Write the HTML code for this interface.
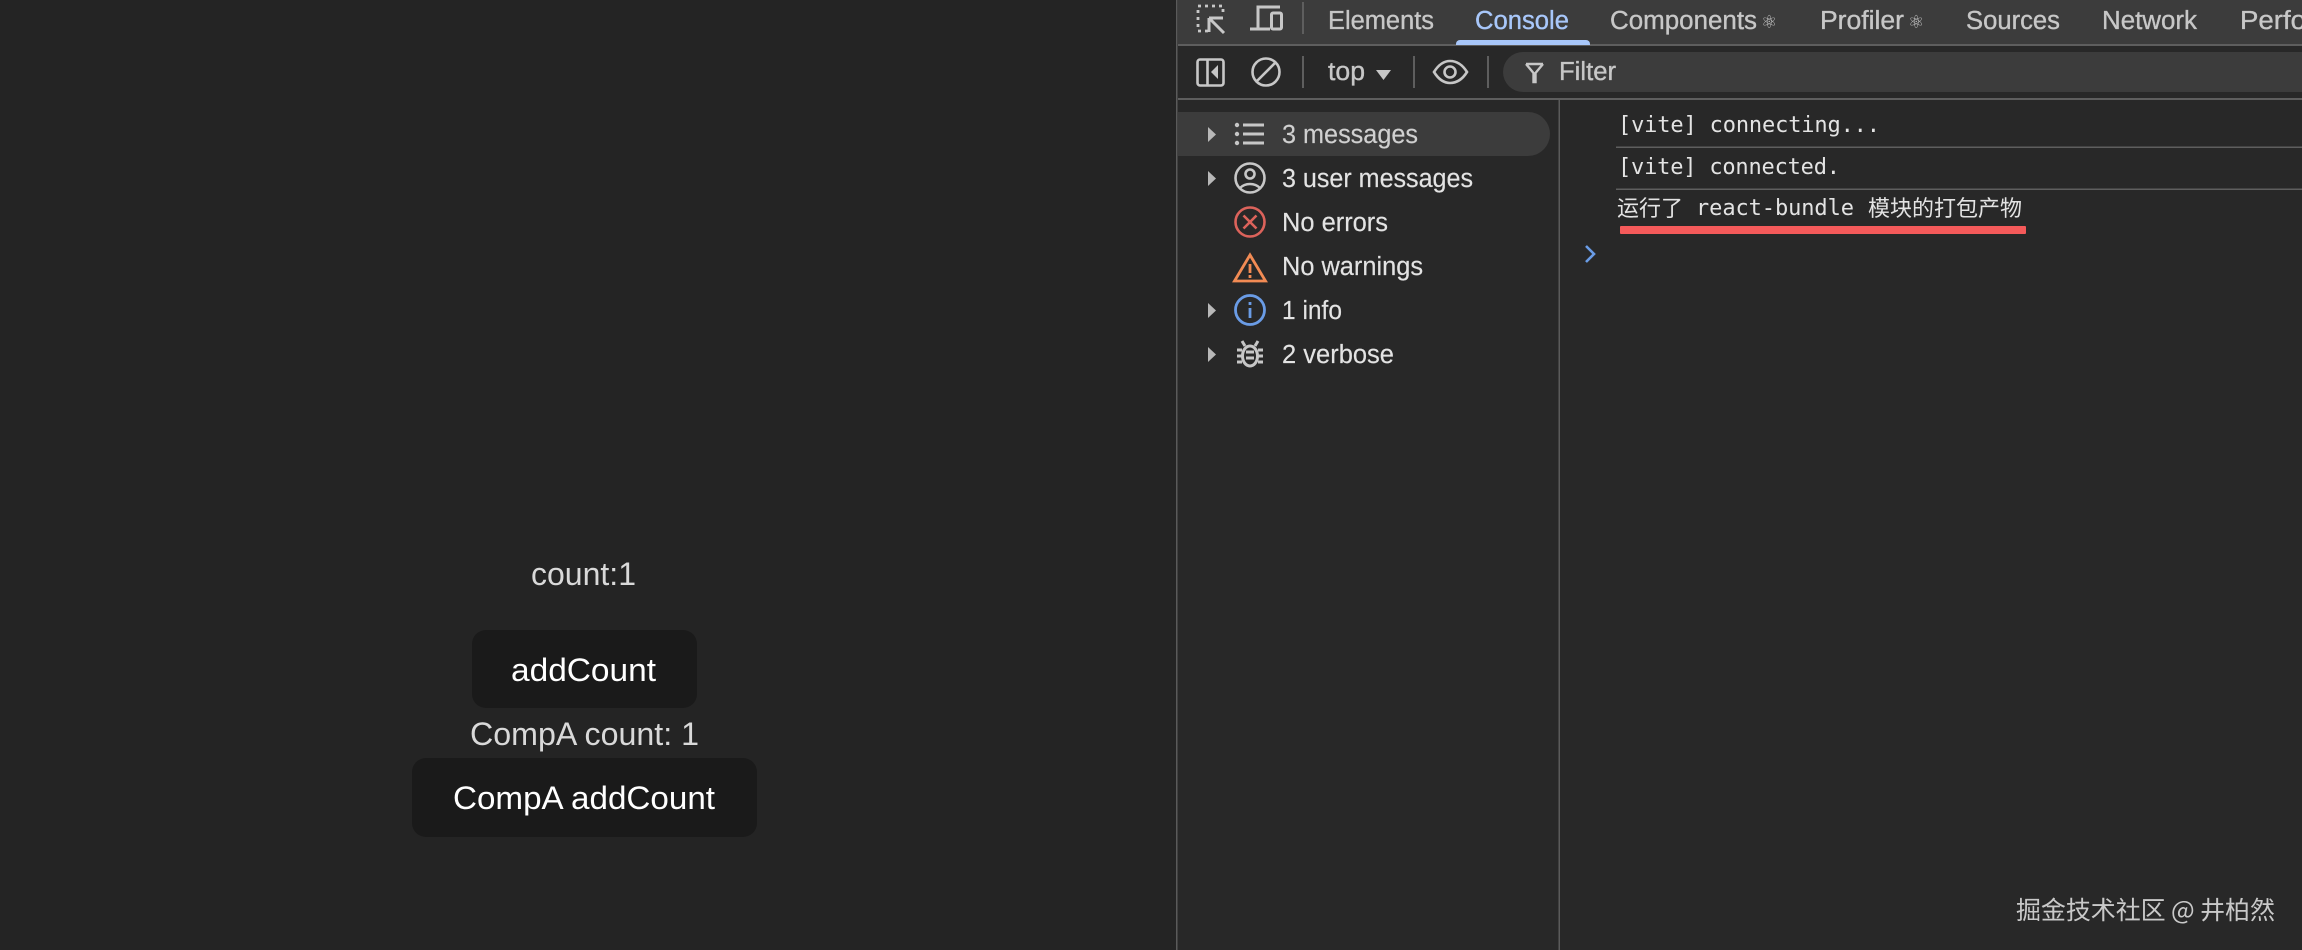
<!DOCTYPE html>
<html lang="zh-CN"><head><meta charset="utf-8"><title>Console</title>
<style>
html,body{margin:0;padding:0;background:#242424;width:2302px;height:950px;overflow:hidden}
svg{display:block}
text{font-family:"Liberation Sans","Noto Sans CJK SC",sans-serif}
.t{font-size:25.5px;fill:#c7c7c7;stroke:#c7c7c7;stroke-width:.35}
.s{font-size:25.5px;fill:#e3e3e3;stroke:#e3e3e3;stroke-width:.15}
.m{font-family:"DejaVu Sans Mono","Noto Sans CJK SC",monospace;font-size:22px;fill:#e3e3e3}
.cj{font-family:"Noto Sans CJK SC",sans-serif;font-size:22px;fill:#e3e3e3}
.l{font-size:32px;fill:#d9d9d9}
.b{font-size:32px;fill:#fff}
.ic{fill:none;stroke:#c7c7c7;stroke-width:2.6}
</style></head><body>
<svg width="2302" height="950" viewBox="0 0 2302 950" xmlns="http://www.w3.org/2000/svg">
<rect width="2302" height="950" fill="#242424"/>
<!-- page -->
<text class="l" x="531" y="585" textLength="105" lengthAdjust="spacingAndGlyphs">count:1</text>
<rect x="472" y="630" width="225" height="78" rx="14" fill="#1a1a1a"/>
<text class="b" x="511" y="681" textLength="145" lengthAdjust="spacingAndGlyphs">addCount</text>
<text class="l" x="470" y="745" textLength="229" lengthAdjust="spacingAndGlyphs">CompA count: 1</text>
<rect x="412" y="758" width="345" height="79" rx="14" fill="#1a1a1a"/>
<text class="b" x="453" y="809" textLength="262" lengthAdjust="spacingAndGlyphs">CompA addCount</text>
<!-- devtools -->
<rect x="1176" y="0" width="1126" height="950" fill="#282828"/>
<rect x="1176" y="0" width="1.500" height="950" fill="#5a5a5a"/>
<rect x="1178" y="0" width="1124" height="44" fill="#3c3c3c"/>
<rect x="1178" y="44" width="1124" height="2" fill="#5e5e5e"/>
<rect x="1178" y="98" width="1124" height="2" fill="#5e5e5e"/>
<rect x="1558.500" y="100" width="1.500" height="850" fill="#5a5a5a"/>
<!-- tabs -->
<g fill="none" stroke="#c7c7c7" stroke-width="2.8">
<path d="M1208 31H1198V6H1223V16" stroke-dasharray="3 4"/>
<path d="M1209 18h14M1209 18v14M1209 18l15 15" stroke-width="3"/>
<path d="M1280 7h-22v21M1250 29h20" stroke-width="3"/>
<rect x="1271.500" y="13" width="10" height="16" rx="1.500" stroke-width="3"/>
</g>
<rect x="1302" y="2" width="2" height="32" fill="#5e5e5e"/>
<text class="t" x="1328" y="29" textLength="106" lengthAdjust="spacingAndGlyphs">Elements</text>
<text class="t" x="1475" y="29" textLength="94" lengthAdjust="spacingAndGlyphs" style="fill:#a8c7fa;stroke:#a8c7fa">Console</text>
<path d="M1456 45v-1a4 4 0 0 1 4-4h126a4 4 0 0 1 4 4v1z" fill="#a8c7fa"/>
<text class="t" x="1610" y="29" textLength="147" lengthAdjust="spacingAndGlyphs">Components</text>
<text class="t" x="1761" y="28" style="font-size:18px;stroke-width:0;font-family:'DejaVu Sans',sans-serif">⚛</text>
<text class="t" x="1820" y="29" textLength="84" lengthAdjust="spacingAndGlyphs">Profiler</text>
<text class="t" x="1908" y="28" style="font-size:18px;stroke-width:0;font-family:'DejaVu Sans',sans-serif">⚛</text>
<text class="t" x="1966" y="29" textLength="94" lengthAdjust="spacingAndGlyphs">Sources</text>
<text class="t" x="2102" y="29" textLength="95" lengthAdjust="spacingAndGlyphs">Network</text>
<text class="t" x="2240" y="29" textLength="66" lengthAdjust="spacingAndGlyphs">Perfo</text>
<!-- toolbar -->
<g fill="none" stroke="#c7c7c7" stroke-width="2.600">
<rect x="1197.500" y="59.500" width="26" height="26" rx="2.500"/>
<path d="M1207.500 60v25"/>
<circle cx="1266" cy="72" r="13.500"/>
<path d="M1256.500 81.500l19-19"/>
</g>
<path d="M1218 65v14l-7-7z" fill="#c7c7c7"/>
<rect x="1302" y="56" width="2" height="32" fill="#5e5e5e"/>
<text class="t" x="1328" y="80" textLength="37" lengthAdjust="spacingAndGlyphs">top</text>
<path d="M1376 70h15l-7.500 10z" fill="#c7c7c7"/>
<rect x="1413" y="56" width="2" height="32" fill="#5e5e5e"/>
<path d="M1434 72c5-8 10-11 16-11s12 3 17 11c-5 8-11 11-17 11s-11-3-16-11z" fill="none" stroke="#c7c7c7" stroke-width="2.600"/>
<circle cx="1450" cy="72" r="5.500" fill="none" stroke="#c7c7c7" stroke-width="2.600"/>
<rect x="1487" y="56" width="2" height="32" fill="#5e5e5e"/>
<path d="M1523 52h779v40h-779a20 20 0 0 1 0-40z" fill="#3c3c3c"/>
<path d="M1526 64h17M1526 64l7.500 9v9h2v-9l7.500-9" fill="none" stroke="#c7c7c7" stroke-width="2.400"/>
<text class="t" x="1559" y="80" textLength="57" lengthAdjust="spacingAndGlyphs">Filter</text>
<!-- sidebar -->
<path d="M1178 112h350a22 22 0 0 1 0 44h-350z" fill="#3c3c3c"/>
<g fill="#b8b8b8">
<path d="M1208 127l8 7.500-8 7.500z"/><path d="M1208 171l8 7.500-8 7.500z"/><path d="M1208 303l8 7.500-8 7.500z"/><path d="M1208 347l8 7.500-8 7.500z"/>
</g>
<g fill="#c7c7c7">
<circle cx="1237" cy="125" r="2.200"/><circle cx="1237" cy="134" r="2.200"/><circle cx="1237" cy="143" r="2.200"/>
<rect x="1243" y="123.500" width="21" height="3"/><rect x="1243" y="132.500" width="21" height="3"/><rect x="1243" y="141.500" width="21" height="3"/>
</g>
<g class="ic">
<circle cx="1250" cy="178" r="14.500"/><circle cx="1250" cy="174" r="4.500"/>
<path d="M1240 188c3-3 6-4 10-4s7 1 10 4"/>
</g>
<g fill="none" stroke="#dc635b" stroke-width="2.600">
<circle cx="1250" cy="222" r="14.500"/><path d="M1243.500 215.500l13 13M1256.500 215.500l-13 13"/>
</g>
<g fill="none" stroke="#f28b54" stroke-width="2.800">
<path d="M1250 255l15.500 26h-31z"/><path d="M1250 264v9M1250 275v3"/>
</g>
<g fill="none" stroke="#6a9ce6" stroke-width="2.800">
<circle cx="1250" cy="310" r="14.500"/><path d="M1250 308v10M1250 302v3"/>
</g>
<g fill="none" stroke="#c7c7c7" stroke-width="3">
<ellipse cx="1250" cy="356" rx="7.500" ry="10"/>
<path d="M1245 346l-3-5M1255 346l3-5M1242 350h-5M1258 350h5M1242 356h-5M1258 356h5M1242 362h-5M1258 362h5M1246 352h8M1246 358h8"/>
</g>
<text class="s" x="1282" y="143" textLength="136" lengthAdjust="spacingAndGlyphs" style="fill:#d0d0d0;stroke:#d0d0d0">3 messages</text>
<text class="s" x="1282" y="187" textLength="191" lengthAdjust="spacingAndGlyphs">3 user messages</text>
<text class="s" x="1282" y="231" textLength="106" lengthAdjust="spacingAndGlyphs">No errors</text>
<text class="s" x="1282" y="275" textLength="141" lengthAdjust="spacingAndGlyphs">No warnings</text>
<text class="s" x="1282" y="319" textLength="60" lengthAdjust="spacingAndGlyphs">1 info</text>
<text class="s" x="1282" y="363" textLength="112" lengthAdjust="spacingAndGlyphs">2 verbose</text>
<!-- console -->
<text class="m" x="1618" y="132" textLength="262" lengthAdjust="spacing">[vite] connecting...</text>
<rect x="1616" y="146.500" width="686" height="1.500" fill="#5e5e5e"/>
<text class="m" x="1618" y="174" textLength="222" lengthAdjust="spacing">[vite] connected.</text>
<rect x="1616" y="188.500" width="686" height="1.500" fill="#5e5e5e"/>
<text class="cj" x="1617" y="216" textLength="66" lengthAdjust="spacing">运行了</text>
<text class="m" x="1696" y="215" textLength="158" lengthAdjust="spacing">react-bundle</text>
<text class="cj" x="1868" y="216" textLength="154" lengthAdjust="spacing">模块的打包产物</text>
<rect x="1620" y="226" width="406" height="8" rx="1" fill="#f55a5a"/>
<path d="M1586 246l8 8-8 8" fill="none" stroke="#6a9ce6" stroke-width="2.600"/>
<text x="2016" y="919" style="font-size:25px;fill:#c9c9c9;font-family:'Noto Sans CJK SC',sans-serif" textLength="259" lengthAdjust="spacing">掘金技术社区 @ 井柏然</text>
</svg>
</body></html>
